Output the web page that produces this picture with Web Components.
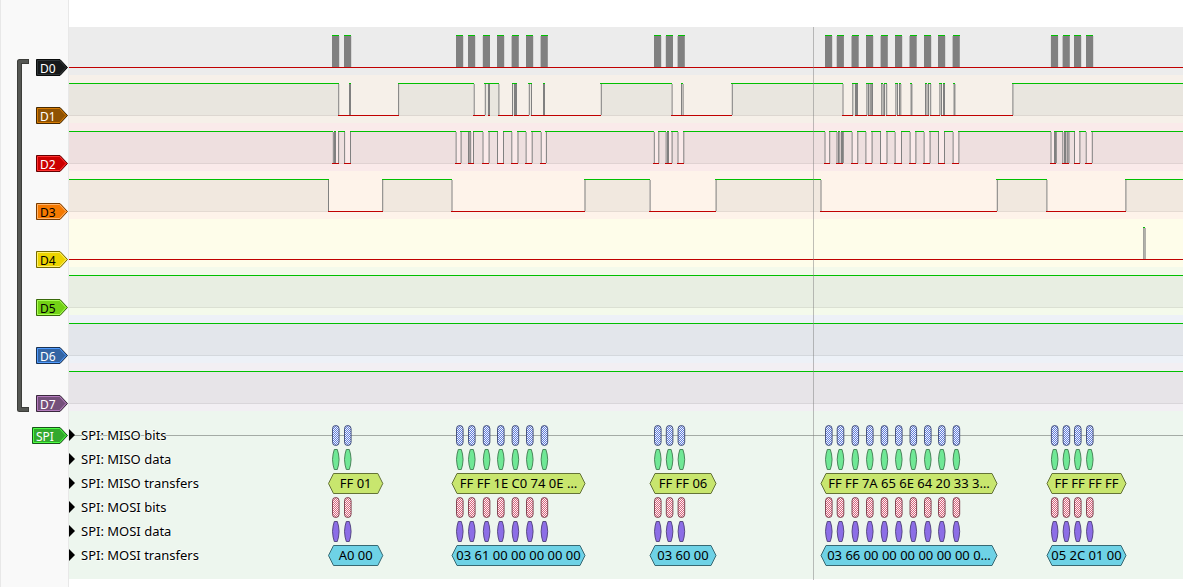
<!DOCTYPE html>
<html lang="en">
<head>
<meta charset="utf-8">
<title>Logic analyzer – SPI capture</title>
<style>
html,body{margin:0;min-height:100%;background:#fff}
body{font:13px/24px "Noto Sans","DejaVu Sans",sans-serif;color:#000}
</style>
</head>
<body>
<trace-view></trace-view>
<script>
// Clock bursts: left edge of every SPI byte, in timeline units
const BURSTS=[332,344,456,468,482.8,497,511.6,526,540.6,654,665.8,677.6,825,836.7,851.5,866,880.6,895,909.5,924,938,952.6,1050.9,1062.6,1074,1086];
// Level changes; every entry toggles the line
const CHANNELS=[
 {name:'D0',fill:'#16191a',edge:'#0a0c0c',light:'#2e3436',ink:'#fff',band:'#ececec',bursts:true,start:0,edges:[]},
 {name:'D1',fill:'#8f5202',edge:'#472901',light:'#d67b03',ink:'#fff',band:'#f6f0e9',high:'#e9e6df',start:1,
  edges:[338.2,349,350,398.1,473.7,484.8,488,489,498.4,512,514,515,516,528.8,531,543,544,600.8,671.6,681,682.6,731.8,842.5,852.3,855,856,857,866.4,868,869.6,870.6,871.5,872,881.2,882.7,884,886.2,895.4,897,899,900.3,910.6,911.4,925,926.5,928,930.2,939.4,941,943,944,953.6,954.4,1012.4]},
 {name:'D2',fill:'#cc0000',edge:'#660000',light:'#ff3333',ink:'#fff',band:'#faeaea',high:'#eedfdf',start:1,
  edges:[332.8,334,335,338.1,344.1,350,455.6,460.6,468,469.3,470.2,473,482.5,488.6,497,503,511.3,517.5,525.6,531.7,540.7,545.9,653.8,658.3,665.6,667,668,671.6,677.5,683.3,824.5,829.2,836.5,838,839.3,841,842,842.8,851.6,857.3,865.4,871.6,880,886.5,894.6,901,909.6,915.4,923.6,929.6,938,944,952.6,958.4,1050.5,1054,1055,1055.8,1062.3,1064,1065,1066.6,1067.4,1068.5,1074,1079.4,1085.7,1091.8]},
 {name:'D3',fill:'#f57900',edge:'#7a3c00',light:'#ffb36b',ink:'#000',band:'#fef3ea',high:'#f1e8df',start:1,
  edges:[328,382.2,451.5,584.5,649.6,715.6,820.5,996.8,1046.4,1125.4]},
 {name:'D4',fill:'#edd400',edge:'#766a00',light:'#fff06b',ink:'#000',band:'#fefdea',high:'#f1f0df',start:0,edges:[1143.3,1144.6]},
 {name:'D5',fill:'#73d216',edge:'#39690b',light:'#aaff55',ink:'#000',band:'#f4faeb',high:'#e8eee2',start:1,edges:[]},
 {name:'D6',fill:'#3465a4',edge:'#1a3252',light:'#4f9bff',ink:'#fff',band:'#edf1f7',high:'#e3e6eb',start:1,edges:[]},
 {name:'D7',fill:'#75507b',edge:'#3a283d',light:'#b57cbe',ink:'#fff',band:'#f2eff3',high:'#e7e4e8',start:1,edges:[]}
];
const SPANS=[[328.5,382.8],[452,585],[650,716],[821,997],[1047,1126]];
const DECODER=[
 {name:'SPI: MISO bits',kind:'bits',fill:'#607be0',edge:'#343f6b',axis:true},
 {name:'SPI: MISO data',kind:'data',fill:'#70e896',edge:'#387449'},
 {name:'SPI: MISO transfers',kind:'text',fill:'#c8e66e',edge:'#647337',values:['FF 01','FF FF 1E C0 74 0E …','FF FF 06','FF FF 7A 65 6E 64 20 33 3…','FF FF FF FF']},
 {name:'SPI: MOSI bits',kind:'bits',fill:'#e0607b',edge:'#703040'},
 {name:'SPI: MOSI data',kind:'data',fill:'#8c6ee6',edge:'#463773'},
 {name:'SPI: MOSI transfers',kind:'text',fill:'#6ed2e6',edge:'#376973',values:['A0 00','03 61 00 00 00 00 00','03 60 00','03 66 00 00 00 00 00 00 0…','05 2C 01 00']}
];
const ORIGIN=69; // timeline value at the left edge of the tracks

// Arrow-shaped name tag of a signal
customElements.define('channel-tag',class extends HTMLElement{
 connectedCallback(){
  const g=a=>this.getAttribute(a),w=+g('width')||32;
  this.attachShadow({mode:'open'}).innerHTML=`<style>
   :host{display:block}
   button{display:grid;width:${w}px;height:17px;margin:0;padding:0;border:0;background:none;font:12px/17px "Noto Sans","DejaVu Sans",sans-serif;color:${g('ink')};text-align:left}
   svg,span{grid-area:1/1}span{padding:1px 0 0 4px;height:16px;line-height:17px}
  </style><button type="button"><svg width="${w}" height="17" aria-hidden="true">
   <path d="M.5.5H${w-8}L${w-.5} 8.5L${w-8} 16.5H.5Z" fill="${g('fill')}" stroke="${g('edge')}"/>
   <path d="M1.5 1.5H${w-8.5}L${w-2} 8.5L${w-8.5} 15.5H1.5Z" fill="none" stroke="${g('light')}"/>
  </svg><span><slot></slot></span></button>`;
 }
});

// Waveform of one channel
customElements.define('logic-trace',class extends HTMLElement{
 connectedCallback(){
  const c=CHANNELS[+this.getAttribute('channel')],END=6000;
  let s='',lv=c.start,x=ORIGIN,bars='';
  const seg=(a,b,h)=>{
   if(h)s+=`<rect x="${a}" y="9" width="${b-a}" height="31" fill="${c.high}"/><rect x="${a}" y="40" width="${b-a}" height="1" fill="#000" opacity=".1"/>`;
   bars+=`<rect x="${Math.floor(a)}" y="${h?8:40}" width="${Math.floor(b)-Math.floor(a)+1}" height="1" fill="${h?'#00c000':'#c00000'}"/>`;
  };
  let edges='';
  for(const e of c.edges){seg(x,e,lv);edges+=`<rect x="${e}" y="9" width="1" height="31" fill="#808080"/>`;x=e;lv^=1}
  seg(x,END,lv);
  if(c.bursts)for(const b of BURSTS){edges+=`<rect x="${b}" y="9" width="7.2" height="31" fill="#808080"/>`;bars+=`<rect x="${Math.round(b)}" y="8" width="7" height="1" fill="#00c000"/>`}
  this.attachShadow({mode:'open'}).innerHTML=`<style>:host{display:block;height:48px;background:${c.band}}svg{display:block;width:100%;height:48px}</style>
  <svg role="img" aria-label="${c.name} waveform"><g transform="translate(${-ORIGIN})">${s}${edges}${bars}</g></svg>`;
 }
});

// One row of decoded annotations
customElements.define('decoder-row',class extends HTMLElement{
 connectedCallback(){
  const r=DECODER[+this.getAttribute('row')];let s='';
  const paint=`fill="${r.fill}" stroke="${r.edge}"`;
  if(r.kind==='bits')for(const b of BURSTS)s+=`<rect x="${b+.5}" y="2.5" width="6.6" height="20" rx="3.3" fill="url(#hatch)" stroke="${r.edge}" stroke-opacity=".85"/>`;
  if(r.kind==='data')for(const b of BURSTS)s+=`<path d="M${b+2.3} 2.5h3l1.2 4.5.6 5.5-.6 5.5-1.2 4.5h-3l-1.2-4.5-.6-5.5.6-5.5Z" ${paint} stroke-opacity=".85"/>`;
  if(r.kind==='text')SPANS.forEach(([a,b],i)=>s+=`<path d="M${a} 12.5L${a+5} 2.5H${b-5}L${b} 12.5L${b-5} 22.5H${a+5}Z" ${paint}/><text x="${(a+b)/2}" y="17" text-anchor="middle">${r.values[i]}</text>`);
  this.attachShadow({mode:'open'}).innerHTML=`<style>
   :host{display:grid;height:24px}
   svg.marks,button{grid-area:1/1}
   svg.marks{display:block;width:100%;height:24px;overflow:hidden}
   button{justify-self:start;position:relative;display:flex;align-items:center;gap:6px;height:24px;margin:0;padding:0;border:0;background:none;color:#000;font:13px/24px "Noto Sans","DejaVu Sans",sans-serif;text-shadow:1px 0 #f8fcf8,-1px 0 #f8fcf8,0 1px #f8fcf8,0 -1px #f8fcf8}
   text{font:13px "Noto Sans","DejaVu Sans",sans-serif}
  </style><svg class="marks"><defs><pattern id="hatch" width="2" height="2" patternUnits="userSpaceOnUse"><rect width="2" height="2" fill="#f4f8f8"/><path d="M0 0h1v1H0ZM1 1h1v1H1Z" fill="${r.fill}"/></pattern></defs>
  ${r.axis?'<rect y="12" width="100%" height="1" fill="#a4aba5"/>':''}<g transform="translate(${-ORIGIN})">${s}</g></svg>
  <button type="button"><svg width="6" height="12" aria-hidden="true"><path d="M0 0L6 6L0 12Z"/></svg><span>${r.name}</span></button>`;
 }
});

// Bracket that joins grouped channels
customElements.define('group-bracket',class extends HTMLElement{
 connectedCallback(){
  this.attachShadow({mode:'open'}).innerHTML=`<style>:host{display:block}svg{display:block}</style>
  <svg width="13" height="353" aria-hidden="true"><path d="M12 2.5H2.5V350.5H12" fill="none" stroke="#3c3d3a" stroke-width="5" stroke-linejoin="round"/><path d="M11 2.5H2.5V350.5H11" fill="none" stroke="#555753" stroke-width="3" stroke-linejoin="round"/></svg>`;
 }
});

customElements.define('trace-view',class extends HTMLElement{
 connectedCallback(){
  const tag=c=>`<channel-tag fill="${c.fill}" edge="${c.edge}" light="${c.light}" ink="${c.ink}">${c.name}</channel-tag>`;
  this.attachShadow({mode:'open'}).innerHTML=`<style>
   :host{display:flex;min-height:100vh;box-sizing:border-box}
   .head{flex:none;box-sizing:border-box;width:69px;padding-top:27px;background:#f9f9f9;border:solid #e8e8e8;border-width:0 1px}
   .group{display:flex;justify-content:space-between;height:384px;padding-left:16px}
   group-bracket{padding-top:32px}
   .tags{display:grid;grid-auto-rows:48px}
   .tags channel-tag{padding-top:32px}
   .spi{display:flex;justify-content:flex-end;padding-top:16px}
   main{flex:1;min-width:0;overflow:hidden;padding-top:27px}
   .tracks{position:relative}
   .decoder{padding:12px 0;background:#edf6ee}
   .cursor{position:absolute;left:744px;top:0;bottom:-1px;width:1px;background:#808080;opacity:.5}
  </style>
  <div class="head"><div class="group"><group-bracket></group-bracket><div class="tags">${CHANNELS.map(tag).join('')}</div></div>
   <div class="spi"><channel-tag width="36" fill="#33a92d" edge="#19541a" light="#4dff44" ink="#fff">SPI</channel-tag></div></div>
  <main><div class="tracks">${CHANNELS.map((c,i)=>`<logic-trace channel="${i}"></logic-trace>`).join('')}
   <div class="decoder">${DECODER.map((r,i)=>`<decoder-row row="${i}"></decoder-row>`).join('')}</div>
   <div class="cursor"></div></div></main>`;
 }
});
</script>
</body>
</html>
